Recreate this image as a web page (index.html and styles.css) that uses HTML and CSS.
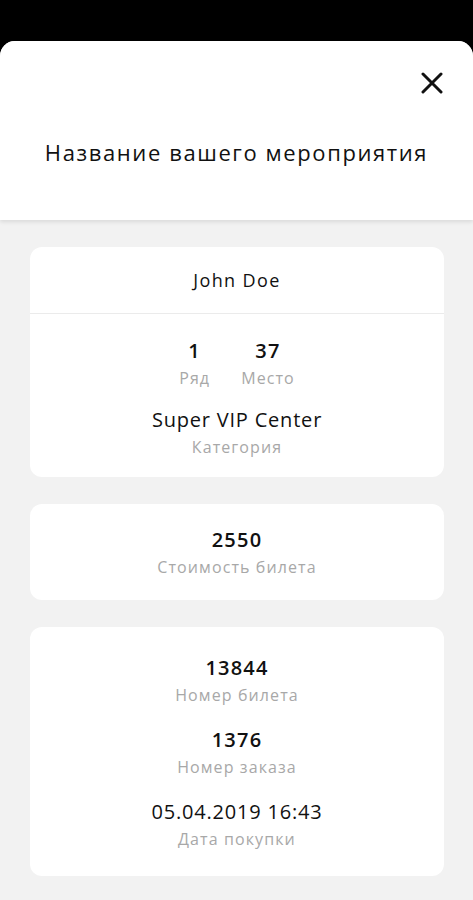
FILE: index.html
```html
<!DOCTYPE html>
<html lang="ru">
<head>
    <meta charset="UTF-8">
    <meta name="viewport" content="width=device-width, initial-scale=1.0">
    <title>Билет</title>
    <link rel="stylesheet" href="styles.css">
</head>
<body>
    <div class="sheet">
        <header class="sheet-header">
            <div class="close-row">
                <button class="close-btn" type="button" aria-label="Закрыть">
                    <svg width="22" height="22" viewBox="0 0 22 22">
                        <path d="M2 2 L20 20 M20 2 L2 20" stroke="#111" stroke-width="3" stroke-linecap="round" fill="none"/>
                    </svg>
                </button>
            </div>
            <h1 class="title">Название вашего мероприятия</h1>
        </header>

        <div class="cards">
            <div class="card">
                <div class="card-name">John Doe</div>
                <div class="card-body first">
                    <div class="pair">
                        <div class="field">
                            <div class="value">1</div>
                            <div class="label">Ряд</div>
                        </div>
                        <div class="field">
                            <div class="value">37</div>
                            <div class="label">Место</div>
                        </div>
                    </div>
                    <div class="field">
                        <div class="value light">Super VIP Center</div>
                        <div class="label">Категория</div>
                    </div>
                </div>
            </div>

            <div class="card">
                <div class="card-body price">
                    <div class="field">
                        <div class="value">2550</div>
                        <div class="label">Стоимость билета</div>
                    </div>
                </div>
            </div>

            <div class="card">
                <div class="card-body info">
                    <div class="field">
                        <div class="value">13844</div>
                        <div class="label">Номер билета</div>
                    </div>
                    <div class="field">
                        <div class="value">1376</div>
                        <div class="label">Номер заказа</div>
                    </div>
                    <div class="field">
                        <div class="value light">05.04.2019 16:43</div>
                        <div class="label">Дата покупки</div>
                    </div>
                </div>
            </div>
        </div>
    </div>
</body>
</html>
```

FILE: styles.css
```css
body {
    margin: 0;
    padding: 0;
    background-color: #000;
    font-family: "Open Sans", "Liberation Sans", sans-serif;
    color: #111;
}
.sheet {
    margin-top: 41px;
    min-height: 859px;
    background-color: #f2f2f2;
    border-radius: 15px 15px 0 0;
    overflow: hidden;
}
.sheet-header {
    height: 179px;
    background-color: #fff;
    box-shadow: 0 2px 4px rgba(0, 0, 0, 0.1);
    position: relative;
}
.close-row {
    display: flex;
    justify-content: flex-end;
    padding: 31px 30px 0 0;
}
.close-btn {
    width: 22px;
    height: 22px;
    padding: 0;
    border: none;
    background: none;
    cursor: pointer;
}
.close-btn svg {
    display: block;
}
.title {
    margin: 43px 0 0;
    font-size: 22px;
    font-weight: 500;
    line-height: 30px;
    letter-spacing: 1.6px;
    text-align: center;
}
.cards {
    display: flex;
    flex-direction: column;
    gap: 27px;
    padding: 27px 29px 24px 30px;
}
.card {
    background-color: #fff;
    border-radius: 12px;
    text-align: center;
}
.card-name {
    height: 66px;
    line-height: 66px;
    font-size: 18px;
    font-weight: 500;
    letter-spacing: 1.4px;
    border-bottom: 1px solid #ebebeb;
}
.card-body {
    display: flex;
    flex-direction: column;
    align-items: center;
}
.card-body.first {
    padding: 23px 0 19px;
    gap: 17px;
}
.card-body.price {
    padding: 22px 0 22px;
}
.card-body.info {
    padding: 27px 0 26px;
    gap: 20px;
}
.pair {
    display: flex;
    gap: 31px;
}
.value {
    font-size: 20px;
    font-weight: 600;
    line-height: 28px;
    letter-spacing: 1.2px;
}
.value.light {
    font-weight: 400;
    letter-spacing: 0.8px;
}
.label {
    margin-top: 2px;
    font-size: 16px;
    line-height: 22px;
    letter-spacing: 1.1px;
    color: #a8a8a8;
}
```
